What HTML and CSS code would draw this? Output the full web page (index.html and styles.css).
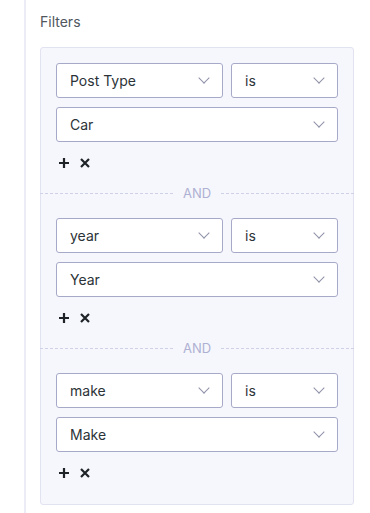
FILE: index.html
```html
<!DOCTYPE html>
<html lang="en">
<head>
    <meta charset="UTF-8">
    <meta name="viewport" content="width=device-width, initial-scale=1.0">
    <title>Filters</title>
    <link rel="stylesheet" href="styles.css">
</head>
<body>
    <div class="sidebar-line"></div>
    <div class="content">
        <h2 class="label">Filters</h2>
        <div class="filters">
            <!-- post type -->
            <div class="group">
                <div class="row">
                    <div class="select grow">Post Type<span class="chev"></span></div>
                    <div class="select op">is<span class="chev"></span></div>
                </div>
                <div class="select">Car<span class="chev"></span></div>
                <div class="actions">
                    <span class="icon">
                        <svg width="12" height="12" viewBox="0 0 12 12"><path d="M6 1v10M1 6h10" stroke="#1d2327" stroke-width="2.2"/></svg>
                    </span>
                    <span class="icon">
                        <svg width="12" height="12" viewBox="0 0 12 12"><path d="M2 2l8 8M10 2l-8 8" stroke="#1d2327" stroke-width="2.2"/></svg>
                    </span>
                </div>
            </div>
            <div class="divider"><span>AND</span></div>
            <!-- year -->
            <div class="group">
                <div class="row">
                    <div class="select grow">year<span class="chev"></span></div>
                    <div class="select op">is<span class="chev"></span></div>
                </div>
                <div class="select">Year<span class="chev"></span></div>
                <div class="actions">
                    <span class="icon">
                        <svg width="12" height="12" viewBox="0 0 12 12"><path d="M6 1v10M1 6h10" stroke="#1d2327" stroke-width="2.2"/></svg>
                    </span>
                    <span class="icon">
                        <svg width="12" height="12" viewBox="0 0 12 12"><path d="M2 2l8 8M10 2l-8 8" stroke="#1d2327" stroke-width="2.2"/></svg>
                    </span>
                </div>
            </div>
            <div class="divider"><span>AND</span></div>
            <!-- make -->
            <div class="group">
                <div class="row">
                    <div class="select grow">make<span class="chev"></span></div>
                    <div class="select op">is<span class="chev"></span></div>
                </div>
                <div class="select">Make<span class="chev"></span></div>
                <div class="actions">
                    <span class="icon">
                        <svg width="12" height="12" viewBox="0 0 12 12"><path d="M6 1v10M1 6h10" stroke="#1d2327" stroke-width="2.2"/></svg>
                    </span>
                    <span class="icon">
                        <svg width="12" height="12" viewBox="0 0 12 12"><path d="M2 2l8 8M10 2l-8 8" stroke="#1d2327" stroke-width="2.2"/></svg>
                    </span>
                </div>
            </div>
        </div>
    </div>
</body>
</html>
```

FILE: styles.css
```css
/* page */
body {
    margin: 0;
    font-family: Inter, "Liberation Sans", sans-serif;
    color: #2c3338;
    background: #fff;
    display: flex;
    height: 513px;
    overflow: hidden;
}

.sidebar-line {
    width: 2px;
    margin-left: 24px;
    background: #ececf6;
    flex-shrink: 0;
}

.content {
    padding: 12px 0 0 14px;
    width: 314px;
}

.label {
    margin: 0 0 15px;
    font-size: 14px;
    font-weight: 400;
    line-height: 20px;
    color: #50575e;
}

/* filter panel */
.filters {
    background: #f6f7fc;
    border: 1px solid #e2e3f0;
    border-radius: 3px;
    padding: 15px 15px 23px;
}

.group {
    display: flex;
    flex-direction: column;
    gap: 9px;
}

.row {
    display: flex;
    gap: 8px;
}

.select {
    position: relative;
    height: 35px;
    box-sizing: border-box;
    border: 1px solid #a7a9c9;
    border-radius: 3px;
    background: #fff;
    padding: 0 13px;
    font-size: 14px;
    line-height: 33px;
    color: #2c3338;
}
.grow {
    flex: 1;
}
.op {
    width: 107px;
}

/* chevron */
.chev {
    position: absolute;
    right: 14px;
    top: 10px;
    width: 7px;
    height: 7px;
    border-right: 1px solid #8f92a8;
    border-bottom: 1px solid #8f92a8;
    transform: rotate(45deg);
}

.actions {
    display: flex;
    gap: 9px;
    padding: 4px 0 0 2px;
    height: 16px;
    align-items: center;
}
.icon {
    display: flex;
}

/* AND divider */
.divider {
    display: flex;
    align-items: center;
    margin: 14px -16px 17px;
    font-size: 13px;
    color: #aeb1d3;
    gap: 10px;
}
.divider::before,
.divider::after {
    content: "";
    flex: 1;
    border-top: 1px dashed #cfd1e6;
}
```
